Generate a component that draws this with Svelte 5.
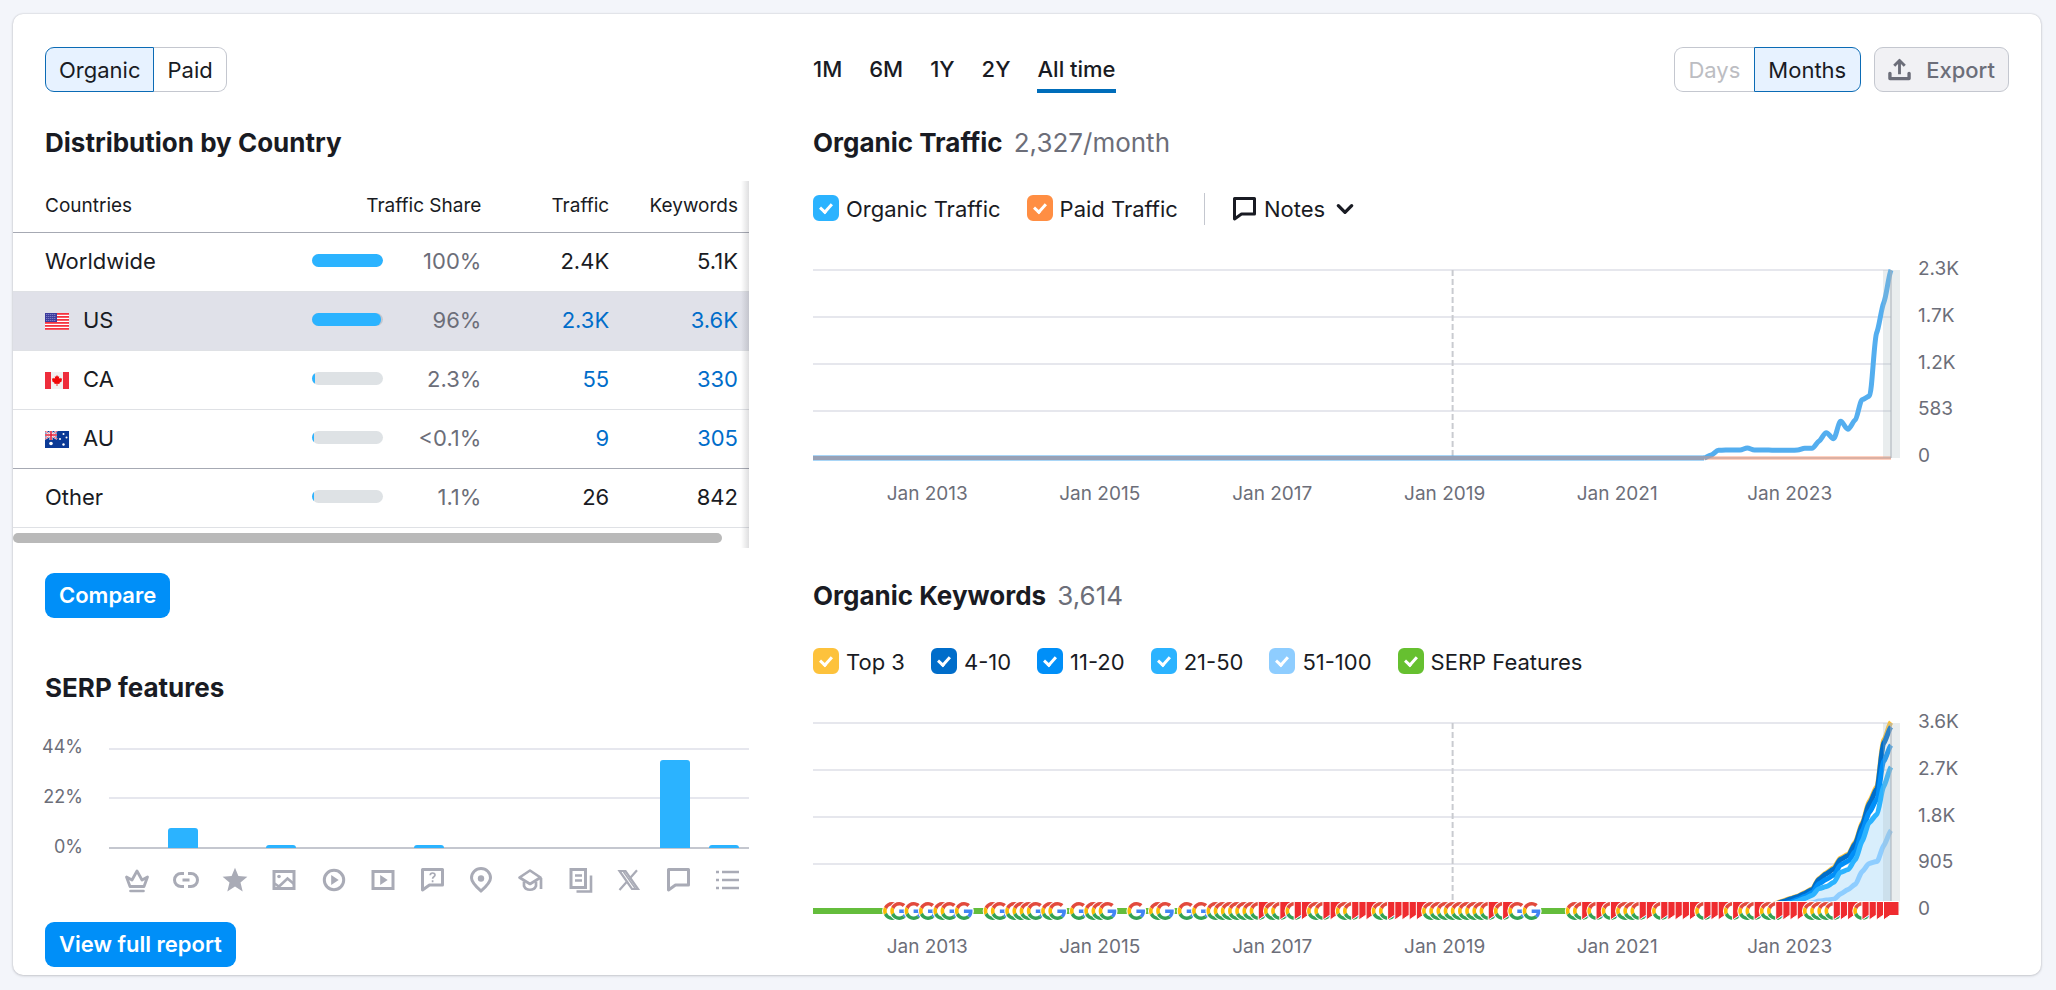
<script>
    let channel = $state("Organic");
    let range = $state("All time");
    let plotWidth = $state(1078);

    const ranges = ["1M", "6M", "1Y", "2Y", "All time"];

    const countries = [
        { name: "Worldwide", share: "100%", bar: 100, traffic: "2.4K", keywords: "5.1K" },
        { name: "US", flag: "us", share: "96%", bar: 96, traffic: "2.3K", keywords: "3.6K", active: true },
        { name: "CA", flag: "ca", share: "2.3%", bar: 3, traffic: "55", keywords: "330" },
        { name: "AU", flag: "au", share: "<0.1%", bar: 2, traffic: "9", keywords: "305", last: true },
        { name: "Other", share: "1.1%", bar: 2, traffic: "26", keywords: "842" }
    ];

    const serp = [
        { icon: "crown", label: "Featured snippet", value: 0 },
        { icon: "link", label: "Sitelinks", value: 20 },
        { icon: "star", label: "Reviews", value: 0 },
        { icon: "image", label: "Image", value: 3 },
        { icon: "video", label: "Video", value: 0 },
        { icon: "carousel", label: "Video carousel", value: 0 },
        { icon: "ask", label: "People also ask", value: 3 },
        { icon: "pin", label: "Local pack", value: 0 },
        { icon: "school", label: "Knowledge panel", value: 0 },
        { icon: "news", label: "Top stories", value: 0 },
        { icon: "x", label: "X", value: 0 },
        { icon: "chat", label: "Discussions", value: 88 },
        { icon: "list", label: "Related searches", value: 3 }
    ];

    let trafficLegend = $state([
        { label: "Organic Traffic", color: "#2bb3ff", on: true },
        { label: "Paid Traffic", color: "#ff8e43", on: true }
    ]);
    let keywordLegend = $state([
        { label: "Top 3", color: "#fdc23c", on: true },
        { label: "4-10", color: "#006dca", on: true },
        { label: "11-20", color: "#008ff8", on: true },
        { label: "21-50", color: "#2bb3ff", on: true },
        { label: "51-100", color: "#8ecdff", on: true },
        { label: "SERP Features", color: "#66c030", on: true }
    ]);

    const years = ["Jan 2013", "Jan 2015", "Jan 2017", "Jan 2019", "Jan 2021", "Jan 2023"];

    // monthly points, the last one is month 150
    const MONTHS = 150;
    const H = 188;
    const organic = [0, 37, 95, 99, 99, 99, 124, 99, 99, 98, 97, 97, 97, 98, 120, 122, 211, 314, 240, 455, 357, 471, 724, 769, 1550, 1927, 2330];
    const top3 = [0, 60, 150, 195, 240, 285, 350, 425, 625, 735, 830, 1015, 1090, 1320, 1690, 2110, 2385, 3285, 3630];
    const pos10 = [0, 55, 140, 185, 230, 275, 340, 410, 610, 715, 805, 990, 1065, 1290, 1660, 2065, 2340, 3230, 3540];
    const pos20 = [0, 40, 95, 135, 170, 220, 280, 350, 525, 610, 690, 885, 960, 1140, 1540, 1900, 2140, 2880, 3190];
    const pos50 = [0, 20, 60, 95, 135, 190, 240, 300, 430, 470, 550, 745, 795, 985, 1345, 1700, 1855, 2400, 2770];
    const pos100 = [0, 10, 30, 50, 80, 110, 140, 155, 190, 210, 225, 330, 410, 510, 760, 915, 950, 1260, 1550];

    const layers = [
        { values: top3, color: "#fdc23c" },
        { values: pos10, color: "#006dca" },
        { values: pos20, color: "#008ff8" },
        { values: pos50, color: "#2bb3ff", fill: "#d8eefc" },
        { values: pos100, color: "#8ecdff" }
    ];

    // G = Google update, F = flagged note, dot = nothing that month, starts at month 11
    const updates =
        "GG.G.G.GG.G...GG.GGGG.GG..G.GGG...G..GG..G.G.GGGGGGG" +
        "FGGFGFFGGFFGGFFFGGFFFFFGGGGGGGGGFGFG.G....." +
        "GGFGFGFGGGFFGFFFFFGFFFGFGGFGGFFFFGGGGFFFGFFFF";
    const markers = updates
        .split("")
        .map((type, i) => ({ type, month: i + 11 }))
        .filter((m) => m.type !== ".");

    const px = (month, width) => (month * width) / MONTHS;

    // cubic through the points with flattened tangents, never overshoots
    function linePath(values, max, width) {
        const first = MONTHS - values.length + 1;
        const pts = values.map((v, i) => [px(first + i, width), H - (v / max) * H]);
        const step = width / MONTHS;
        const slope = pts.slice(1).map((p, i) => (p[1] - pts[i][1]) / step);
        const tan = pts.map((p, i) => {
            if (i === 0) return slope[0];
            if (i === pts.length - 1) return slope[i - 1] / 2;
            const a = slope[i - 1];
            const b = slope[i];
            if (a * b <= 0) return 0;
            return Math.sign(a) * Math.min(Math.abs(a), Math.abs(b)) * 0.5;
        });
        let d = `M${pts[0][0]},${pts[0][1]}`;
        for (let i = 1; i < pts.length; i++) {
            const [x0, y0] = pts[i - 1];
            const [x1, y1] = pts[i];
            const t = step / 3;
            d += `C${x0 + t},${y0 + tan[i - 1] * t},${x1 - t},${y1 - tan[i] * t},${x1},${y1}`;
        }
        return d;
    }
</script>

<svelte:head>
    <title>Domain overview</title>
</svelte:head>

{#snippet flag(code)}
    <svg class="flag" viewBox="0 0 24 17" aria-hidden="true">
        {#if code === "us"}
            <rect width="24" height="17" fill="#fff" />
            {#each [0, 1, 2, 3, 4, 5] as i}
                <rect y={i * 3} width="24" height="1.8" fill="#f5333f" />
            {/each}
            <rect width="12" height="9" fill="#3c3b9e" />
            {#each [1, 3, 5, 7] as y}
                {#each [1, 3, 5, 7, 9] as x}
                    <rect x={x + 0.4} y={y} width="0.8" height="0.8" fill="#c3c4ea" />
                {/each}
            {/each}
        {:else if code === "ca"}
            <rect width="24" height="17" fill="#f1f1f1" />
            <rect width="6" height="17" fill="#ee2d3c" />
            <rect x="18" width="6" height="17" fill="#ee2d3c" />
            <path d="M12 3l1 1.8 1.2-.5-.3 2.4 1.3-1 .5.9 1.500-.1-.7 1.900.6.5-2.700 2.100.2.900-2.200-.2v2.300h-.8v-2.300l-2.200.2.2-.9-2.700-2.100.6-.5-.7-1.900 1.500.1.5-.9 1.300 1-.3-2.400 1.200.5z" fill="#f00808" />
        {:else}
            <rect width="24" height="17" fill="#0b3a96" />
            <path d="M0 0l12 8M12 0L0 8" stroke="#fff" stroke-width="2" />
            <path d="M0 0l12 8M12 0L0 8" stroke="#e0203a" stroke-width="0.8" />
            <path d="M6 0v9M0 4h12" stroke="#fff" stroke-width="3" />
            <path d="M6 0v9M0 4h12" stroke="#e0203a" stroke-width="1.6" />
            <circle cx="6" cy="12.5" r="1.8" fill="#fff" />
            <circle cx="18.5" cy="3" r="1" fill="#fff" />
            <circle cx="15" cy="8" r="1" fill="#fff" />
            <circle cx="21.5" cy="6.5" r="1" fill="#fff" />
            <circle cx="18.5" cy="13.5" r="1.2" fill="#fff" />
        {/if}
    </svg>
{/snippet}

{#snippet icon(name)}
    <svg class="icon" viewBox="0 0 26 26" fill="none" stroke="currentColor" stroke-width="3" aria-hidden="true">
        {#if name === "crown"}
            <path d="M2.5 10l5.500 3L13 4l5 9 5.500-3-3.500 9.500H6z" stroke-linejoin="round" stroke-width="2.8" />
            <path d="M6.5 24h13" stroke-linecap="round" stroke-width="2.6" />
        {:else if name === "link"}
            <path d="M11 6.5H8a6.500 6.500 0 0 0 0 13h3M15 6.500h3a6.500 6.500 0 0 1 0 13h-3M9.500 13h7" />
        {:else if name === "star"}
            <path d="M13 .8l3.400 8.200 9 .7-6.900 5.800 2.200 8.900L13 19.600l-7.700 4.800 2.200-8.900L.6 9.700l9-.7z" fill="currentColor" stroke="none" />
        {:else if name === "image"}
            <rect x="3" y="4.5" width="20" height="17" />
            <path d="M3.5 16.500l4.500 3 8.500-8 6.500 5.500" stroke-width="2.6" />
            <circle cx="8" cy="9.5" r="1.8" fill="currentColor" stroke="none" />
        {:else if name === "video"}
            <circle cx="13" cy="13" r="9.7" />
            <path d="M10.2 8l7.500 5-7.500 5z" fill="currentColor" stroke="none" />
        {:else if name === "carousel"}
            <rect x="3" y="4.5" width="20" height="17" />
            <path d="M10.2 8l7.500 5-7.500 5z" fill="currentColor" stroke="none" />
        {:else if name === "ask"}
            <path d="M3.5 2.500h20v15.500h-13l-7 5z" stroke-linejoin="round" />
            <path d="M11.2 8.300c0-3 4.800-3 4.800-.3 0 1.900-2.400 1.700-2.400 3.800M13.600 13.200v2" stroke-width="1.7" />
        {:else if name === "pin"}
            <path d="M13 24C8.500 20 3.500 15.700 3.500 11a9.500 9.500 0 0 1 19 0c0 4.700-5 9-9.500 13z" />
            <circle cx="13" cy="11.5" r="3.2" fill="currentColor" stroke="none" />
        {:else if name === "school"}
            <path d="M13 3.500L2.500 10.500 13 17l10.500-6.500z" stroke-linejoin="round" stroke-width="2.7" />
            <path d="M7 14.500v4.500c2 5 10 5 12 0v-4.500M24 11v11" stroke-width="2.7" />
        {:else if name === "news"}
            <rect x="4" y="2.5" width="14.5" height="18" />
            <path d="M8 8.500h7M8 13.500h7" stroke-width="2.3" />
            <path d="M24 8.500v16H9.500" stroke-width="2.6" />
        {:else if name === "x"}
            <path d="M3.5 4h6l12.500 18h-6z" stroke-width="2.2" />
            <path d="M7.5 4.800l12 17" stroke-width="1.6" />
            <path d="M21 3.200l-7.500 8.500M11.500 14l-8 9" stroke-width="2.2" />
        {:else if name === "chat"}
            <path d="M3.5 2.500h20v15.500h-13l-7 5z" stroke-linejoin="round" />
        {:else}
            <path d="M8 5h17M8 13h17M8 21h17M2 5h3M2 13h3M2 21h3" stroke-width="2.6" />
        {/if}
    </svg>
{/snippet}

{#snippet legend(items)}
    {#each items as item}
        <label class="check">
            <input type="checkbox" bind:checked={item.on} style="--box: {item.color}" />
            <span>{item.label}</span>
        </label>
    {/each}
{/snippet}

{#snippet gridLines()}
    {#each [0, 1, 2, 3] as i}
        <line x1="0" x2={plotWidth} y1={i * 47} y2={i * 47} class="gridLine" />
    {/each}
    <line x1="0" x2={plotWidth} y1={H} y2={H} class="baseLine" />
    <line x1={px(89, plotWidth)} x2={px(89, plotWidth)} y1="0" y2={H} class="noteLine" />
{/snippet}

{#snippet cursor()}
    <rect x={plotWidth - 8} y="0" width="17" height={H} class="cursorBand" />
    <line x1={plotWidth} x2={plotWidth} y1="0" y2={H} class="cursorLine" />
{/snippet}

{#snippet axes(labels)}
    <div class="yAxis">
        {#each labels as label}
            <span>{label}</span>
        {/each}
    </div>
    <div class="xAxis">
        {#each years as year}
            <span>{year}</span>
        {/each}
    </div>
{/snippet}

<main class="card">
    <section class="left">
        <div class="toggle inset">
            {#each ["Organic", "Paid"] as name}
                <button class:active={channel === name} onclick={() => (channel = name)}>{name}</button>
            {/each}
        </div>

        <h2 class="inset">Distribution by Country</h2>
        <div class="tableBox">
            <table>
                <thead>
                    <tr>
                        <th class="country">Countries</th>
                        <th class="share">Traffic Share</th>
                        <th>Traffic</th>
                        <th>Keywords</th>
                    </tr>
                </thead>
                <tbody>
                    {#each countries as row}
                        <tr class:selected={row.active} class:strong={row.last}>
                            <td class="country">
                                {#if row.flag}{@render flag(row.flag)}{/if}{row.name}
                            </td>
                            <td class="share">
                                <div class="shareCell">
                                    <div class="track"><div class="fill" style="width: {row.bar}%"></div></div>
                                    <span>{row.share}</span>
                                </div>
                            </td>
                            <td>
                                {#if row.flag}<a href="#traffic">{row.traffic}</a>{:else}{row.traffic}{/if}
                            </td>
                            <td>
                                {#if row.flag}<a href="#keywords">{row.keywords}</a>{:else}{row.keywords}{/if}
                            </td>
                        </tr>
                    {/each}
                </tbody>
            </table>
            <div class="scrollbar"></div>
        </div>
        <button class="primary inset">Compare</button>

        <h2 class="inset serpTitle">SERP features</h2>
        <div class="serpChart">
            <div class="serpLabels"><span>44%</span><span>22%</span><span>0%</span></div>
            <div class="serpPlot">
                <div class="serpLines"><i></i><i></i><i></i></div>
                {#each serp as item}
                    <div class="bar" style="height: {item.value}%"></div>
                {/each}
            </div>
            <div class="serpIcons">
                {#each serp as item}
                    <span role="img" aria-label={item.label}>{@render icon(item.icon)}</span>
                {/each}
            </div>
        </div>
        <button class="primary inset">View full report</button>
    </section>

    <section class="right">
        <div class="topBar">
            <div class="tabs">
                {#each ranges as name}
                    <button class:current={range === name} onclick={() => (range = name)}>{name}</button>
                {/each}
            </div>
            <div class="actions">
                <div class="toggle">
                    <button disabled>Days</button>
                    <button class="active">Months</button>
                </div>
                <button class="export">
                    <svg class="exportIcon" viewBox="0 0 24 24" fill="none" stroke="currentColor" stroke-width="3.5" stroke-linejoin="round" aria-hidden="true">
                        <path d="M12 17V4M6.500 8L12 2.500 17.500 8" stroke-width="3" />
                        <path d="M2 16v5.500h20V16" stroke-linecap="round" />
                    </svg>
                    Export
                </button>
            </div>
        </div>

        <h2>Organic Traffic <span>2,327/month</span></h2>
        <div class="legend">
            {@render legend(trafficLegend)}
            <button class="notes">
                {@render icon("chat")}
                Notes
                <svg class="chevron" viewBox="0 0 18 12" fill="none" stroke="currentColor" stroke-width="3" stroke-linecap="round" stroke-linejoin="round" aria-hidden="true">
                    <path d="M3 3l6 6 6-6" />
                </svg>
            </button>
        </div>
        <div class="chart">
            <div class="plot" bind:clientWidth={plotWidth}>
                <svg width={plotWidth} height={H} role="img" aria-label="Organic traffic by month">
                    {@render gridLines()}
                    <path d="M0,{H}H{px(124, plotWidth)}" class="trafficLine" />
                    <path d={linePath(organic, 2330, plotWidth)} class="trafficLine" />
                    <path d="M0,{H}H{plotWidth}" class="paidLine" />
                    {@render cursor()}
                </svg>
            </div>
            {@render axes(["2.3K", "1.7K", "1.2K", "583", "0"])}
        </div>

        <h2 class="keywordTitle">Organic Keywords <span>3,614</span></h2>
        <div class="legend">
            {@render legend(keywordLegend)}
        </div>
        <div class="chart">
            <div class="plot">
                <svg width={plotWidth} height={H} role="img" aria-label="Organic keywords by month">
                    {@render gridLines()}
                    {#each layers as layer}
                        {@const d = linePath(layer.values, 3614, plotWidth)}
                        <path d="{d}V{H}H{px(132, plotWidth)}z" fill={layer.fill ?? "none"} />
                        <path {d} fill="none" stroke={layer.color} stroke-width="5" />
                    {/each}
                    {@render cursor()}
                    <path d="M0,{H}H{plotWidth}" class="serpLine" />
                    {#each markers as m}
                        <g transform="translate({px(m.month, plotWidth)} {H})">
                            {#if m.type === "G"}
                                <circle r="10" fill="#fff" />
                                <g transform="translate(-9 -9) scale(0.375)">
                                    <path fill="#e24a3d" d="M24 9.500c3.540 0 6.710 1.220 9.210 3.600l6.850-6.850C35.900 2.380 30.470 0 24 0 14.620 0 6.510 5.380 2.560 13.220l7.980 6.190C12.430 13.720 17.740 9.500 24 9.500z" />
                                    <path fill="#4285f4" d="M46.980 24.550c0-1.570-.15-3.090-.38-4.550H24v9.020h12.940c-.58 2.960-2.260 5.480-4.780 7.180l7.730 6c4.510-4.180 7.090-10.360 7.090-17.650z" />
                                    <path fill="#fbbc05" d="M10.530 28.590c-.48-1.450-.76-2.990-.76-4.590s.27-3.140.76-4.590l-7.980-6.190C.92 16.460 0 20.120 0 24c0 3.880.92 7.540 2.560 10.780l7.970-6.190z" />
                                    <path fill="#34a353" d="M24 48c6.480 0 11.930-2.130 15.890-5.810l-7.730-6c-2.150 1.450-4.920 2.300-8.160 2.300-6.260 0-11.570-4.220-13.470-9.910l-7.980 6.190C6.510 42.620 14.620 48 24 48z" />
                                </g>
                            {:else}
                                <path d="M-7.500 -9.500h15.500V4.500H-1L-7.500 9z" fill="#ef2b2f" stroke="#fff" stroke-width="1" />
                            {/if}
                        </g>
                    {/each}
                </svg>
            </div>
            {@render axes(["3.6K", "2.7K", "1.8K", "905", "0"])}
        </div>
    </section>
</main>

<style>
    :global(body) {
        margin: 0;
        background: #f3f5fa;
    }
    .card {
        display: grid;
        grid-template-columns: 8fr 13fr;
        column-gap: 64px;
        margin: 14px 15px 15px 13px;
        padding: 33px 32px 8px 0;
        background: #fff;
        border-radius: 10px;
        box-shadow: 0 0 2px rgba(25, 27, 35, 0.2), 0 1px 3px rgba(25, 27, 35, 0.16);
        color: #191b23;
        font-family: Inter, "Liberation Sans", sans-serif;
        font-size: 22px;
        line-height: 32px;
    }
    .left,
    .right {
        min-width: 0;
    }
    .inset {
        margin-left: 32px;
    }
    button {
        font: inherit;
        color: inherit;
        cursor: pointer;
    }
    h2 {
        margin-top: 35px;
        margin-bottom: 22px;
        font-size: 26px;
        font-weight: 700;
        line-height: 32px;
    }
    h2 span {
        margin-left: 5px;
        color: #6c6e79;
        font-weight: 400;
    }

    .toggle {
        display: flex;
    }
    .toggle button {
        box-sizing: border-box;
        height: 45px;
        padding: 0 13px;
        background: #fff;
        border: 1px solid #c4c7cf;
    }
    .toggle button:first-child {
        border-right-width: 0;
        border-radius: 9px 0 0 9px;
    }
    .toggle button:last-child {
        border-left-width: 0;
        border-radius: 0 9px 9px 0;
    }
    .toggle button.active {
        background: #e7f2ff;
        border: 1px solid #0b6bb5;
    }
    .toggle button:disabled {
        color: #bcbdc2;
    }

    .tableBox {
        position: relative;
        display: flow-root;
    }
    .tableBox::after {
        content: "";
        position: absolute;
        top: 0;
        right: 0;
        bottom: 0;
        width: 8px;
        background: linear-gradient(to right, rgba(25, 27, 35, 0), rgba(25, 27, 35, 0.14));
    }
    table {
        width: 100%;
        table-layout: fixed;
        border-collapse: collapse;
    }
    th,
    td {
        box-sizing: border-box;
        width: 17.5%;
        height: 59px;
        padding: 0 11px 2px 0;
        border-bottom: 1px solid #dfe1e5;
        text-align: right;
        font-weight: 400;
    }
    th {
        height: 51px;
        padding-bottom: 0;
        border-bottom-color: #a6a9b3;
        font-size: 19px;
    }
    .strong td {
        border-bottom-color: #a6a9b3;
    }
    .country {
        width: 40%;
        padding-left: 32px;
        text-align: left;
    }
    .share {
        width: 25%;
        padding-left: 5px;
        padding-right: 10px;
    }
    .selected td {
        background: #e0e1e9;
    }
    .flag {
        width: 24px;
        height: 17px;
        margin-right: 14px;
        vertical-align: -2px;
    }
    .shareCell {
        display: flex;
        align-items: center;
        justify-content: space-between;
        color: #6c6e79;
    }
    .track {
        width: 71px;
        height: 13px;
        overflow: hidden;
        background: #dee2e5;
        border-radius: 7px;
    }
    .selected .track {
        background: #c4c7cf;
    }
    .fill {
        height: 13px;
        background: #2bb3ff;
        border-radius: 0 6px 6px 0;
    }
    a {
        color: #006dca;
        text-decoration: none;
    }
    .scrollbar {
        width: 709px;
        max-width: 97%;
        height: 10px;
        margin: 5px 0;
        background: #b9b9b9;
        border-radius: 5px;
    }
    .primary {
        display: block;
        height: 45px;
        margin-top: 25px;
        padding: 0 14px;
        background: #008ff8;
        border: 0;
        border-radius: 9px;
        color: #fff;
        font-weight: 600;
    }

    .serpTitle {
        margin-top: 54px;
        margin-bottom: 44px;
    }
    .serpChart {
        display: grid;
        grid-template-columns: 70px 1fr;
        column-gap: 26px;
    }
    .serpLabels {
        display: flex;
        flex-direction: column;
        justify-content: space-between;
        margin: -13px 0 -11px;
        color: #6c6e79;
        font-size: 18px;
        line-height: 24px;
        text-align: right;
    }
    .serpPlot {
        position: relative;
        display: grid;
        grid-template-columns: repeat(13, 1fr);
        align-items: end;
        justify-items: center;
        height: 100px;
    }
    .serpLines {
        position: absolute;
        inset: 0 0 -1px;
        display: flex;
        flex-direction: column;
        justify-content: space-between;
    }
    .serpLines i {
        height: 2px;
        background: #e6e7ee;
    }
    .serpLines i:last-child {
        background: #c4c7cf;
    }
    .bar {
        position: relative;
        width: 30px;
        background: #2bb3ff;
        border-radius: 3px 3px 0 0;
    }
    .serpIcons {
        grid-column: 2;
        display: grid;
        grid-template-columns: repeat(13, 1fr);
        justify-items: center;
        margin: 19px -3px 4px 3px;
        color: #a9abb6;
    }
    .serpIcons span {
        display: flex;
    }
    .icon {
        width: 26px;
        height: 26px;
    }

    .topBar,
    .actions,
    .tabs,
    .legend,
    .check,
    .export,
    .notes {
        display: flex;
        align-items: center;
    }
    .topBar {
        justify-content: space-between;
        height: 45px;
    }
    .tabs {
        gap: 27px;
    }
    .tabs button {
        height: 46px;
        padding: 0;
        background: none;
        border: 0;
        border-top: 3px solid transparent;
        border-bottom: 4px solid transparent;
        font-weight: 500;
    }
    .tabs .current {
        border-bottom-color: #006dba;
    }
    .actions {
        gap: 13px;
    }
    .actions .toggle button {
        padding: 0 14px 0 13px;
    }
    .export {
        box-sizing: border-box;
        height: 45px;
        padding: 0 13px;
        gap: 15px;
        background: #f1f1f4;
        border: 1px solid #c4c7cf;
        border-radius: 9px;
        color: #6c6e79;
        font-weight: 500;
    }
    .exportIcon {
        width: 23px;
        height: 23px;
    }

    .right h2 {
        margin-bottom: 33px;
    }
    .legend {
        height: 34px;
        gap: 26px;
    }
    .check {
        gap: 7px;
    }
    .check input {
        appearance: none;
        display: grid;
        place-items: center;
        width: 26px;
        height: 26px;
        margin: 0 0 2px;
        border: 2px solid var(--box);
        border-radius: 6px;
    }
    .check input:checked {
        background: var(--box);
    }
    .check input:checked::after {
        content: "";
        width: 5px;
        height: 9px;
        margin-bottom: 3px;
        border: solid #fff;
        border-width: 0 3px 3px 0;
        transform: rotate(42deg);
    }
    .notes {
        height: 32px;
        padding: 0 0 0 26px;
        gap: 7px;
        background: none;
        border: 0;
        border-left: 1px solid #c4c7cf;
    }
    .chevron {
        width: 20px;
        height: 14px;
        margin-left: 3px;
    }

    .chart {
        display: grid;
        grid-template-columns: 1fr 91px;
        column-gap: 27px;
        margin-top: 44px;
    }
    .plot {
        min-width: 0;
        height: 188px;
    }
    .plot svg {
        display: block;
        overflow: visible;
    }
    .gridLine {
        stroke: #e6e7ed;
        stroke-width: 2;
    }
    .baseLine {
        stroke: #c4c7cf;
        stroke-width: 2;
    }
    .noteLine {
        stroke: #c9cbd0;
        stroke-width: 2;
        stroke-dasharray: 6 3;
    }
    .cursorBand {
        fill: #a9b8bc;
        opacity: 0.26;
    }
    .cursorLine {
        stroke: #a9b0b8;
        stroke-width: 1;
    }
    .trafficLine {
        fill: none;
        stroke: #54aeef;
        stroke-width: 5;
    }
    .paidLine {
        stroke: #ff8e63;
        stroke-width: 4;
        opacity: 0.4;
    }
    .serpLine {
        stroke: #64bd3c;
        stroke-width: 6;
    }
    .yAxis {
        display: flex;
        flex-direction: column;
        justify-content: space-between;
        margin: -13px 0 -10px;
    }
    .yAxis,
    .xAxis {
        color: #6c6e79;
        font-size: 19px;
        line-height: 24px;
    }
    .xAxis {
        display: grid;
        grid-template-columns: 26fr repeat(6, 160fr) 14fr;
        margin-top: 24px;
        text-align: center;
    }
    .xAxis::before {
        content: "";
    }
    .right .keywordTitle {
        margin-top: 74px;
    }
</style>
